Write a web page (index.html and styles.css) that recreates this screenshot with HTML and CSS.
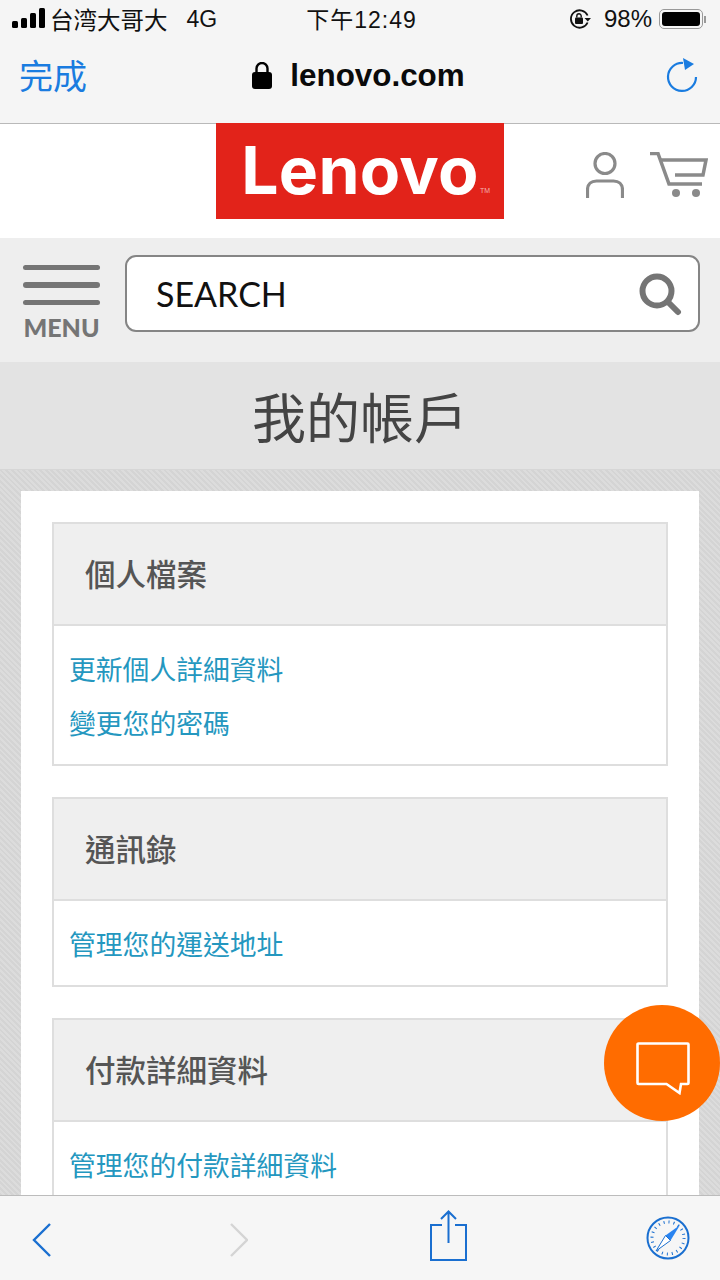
FILE: index.html
```html
<!DOCTYPE html>
<html lang="zh-Hant">
<head>
  <meta charset="UTF-8" />
  <meta name="viewport" content="width=device-width, initial-scale=1.0" />
  <title>我的帳戶</title>
  <link rel="stylesheet" href="styles.css">
</head>
<body>
  <div class="status-bar">
    <div class="status-left">
      <svg class="signal" width="34" height="20" viewBox="0 0 34 20">
        <rect x="0" y="13" width="6" height="7" rx="1.5" />
        <rect x="9" y="10" width="6" height="10" rx="1.5" />
        <rect x="18" y="5" width="6" height="15" rx="1.5" />
        <rect x="27" y="0" width="6" height="20" rx="1.5" />
      </svg>
      <span class="carrier">台湾大哥大</span>
      <span class="network">4G</span>
    </div>
    <div class="status-time">下午12:49</div>
    <div class="status-right">
      <svg width="22" height="20" viewBox="0 0 22 20">
        <path d="M18.6 13.5A8.7 8.7 0 1 1 18.6 6.5" fill="none" stroke="#111" stroke-width="1.8" />
        <path d="M15.5 9h6.5l-3.2 3.6z" fill="#111" />
        <rect x="6" y="8.5" width="8" height="6.5" rx="1" fill="#111" />
        <path d="M7.8 8.5V7a2.2 2.2 0 0 1 4.4 0v1.5" fill="none" stroke="#111" stroke-width="1.4" />
      </svg>
      <span class="battery-pct">98%</span>
      <div class="battery"><div class="battery-fill"></div></div>
      <div class="battery-tip"></div>
    </div>
  </div>

  <div class="url-bar">
    <div class="done">完成</div>
    <div class="address">
      <svg width="20" height="27" viewBox="0 0 20 27">
        <rect x="0" y="10" width="20" height="17" rx="3" fill="#000" />
        <path d="M4.5 11V6.5a5.5 5.5 0 0 1 11 0V11" fill="none" stroke="#000" stroke-width="2.4" />
      </svg>
      <span>lenovo.com</span>
    </div>
    <div class="reload">
      <svg width="32" height="36" viewBox="0 0 32 36">
        <path d="M30 20A14 14 0 1 1 17 6" fill="none" stroke="#1a7ce0" stroke-width="2.2" />
        <path d="M17 1L28 7 19 13z" fill="#1a7ce0" />
      </svg>
    </div>
  </div>

  <header class="site-header">
    <div class="logo"><span class="logo-text">Lenovo</span><span class="logo-tm">TM</span></div>
    <div class="header-icons">
      <svg width="38" height="46" viewBox="0 0 38 46">
        <circle cx="19" cy="11.5" r="10" fill="none" stroke="#8a8a8a" stroke-width="3.2" />
        <path d="M1.500 46V38c0-6 4-9 9-9h17c5 0 9 3 9 9v8" fill="none" stroke="#8a8a8a" stroke-width="3.2" />
      </svg>
      <svg width="58" height="46" viewBox="0 0 58 46">
        <path d="M0 1.500h8L19 32h33" fill="none" stroke="#8a8a8a" stroke-width="3.5" />
        <path d="M11 8h45L53 23H25" fill="none" stroke="#8a8a8a" stroke-width="3.5" />
        <circle cx="26" cy="41" r="4" fill="#8a8a8a" />
        <circle cx="46" cy="41" r="4" fill="#8a8a8a" />
      </svg>
    </div>
  </header>

  <div class="search-row">
    <div class="menu">
      <div class="menu-bar"></div>
      <div class="menu-bar"></div>
      <div class="menu-bar"></div>
      <div class="menu-label">MENU</div>
    </div>
    <div class="search-box">
      <span>SEARCH</span>
      <svg width="44" height="44" viewBox="0 0 44 44">
        <circle cx="19" cy="19" r="14.5" fill="none" stroke="#757575" stroke-width="6" />
        <path d="M30 30l10 10" stroke="#757575" stroke-width="6" stroke-linecap="round" />
      </svg>
    </div>
  </div>

  <h1 class="page-title">我的帳戶</h1>

  <main class="content">
    <div class="card">
      <section class="panel">
        <h2>個人檔案</h2>
        <div class="panel-body">
          <a href="#">更新個人詳細資料</a>
          <a href="#">變更您的密碼</a>
        </div>
      </section>
      <section class="panel">
        <h2>通訊錄</h2>
        <div class="panel-body">
          <a href="#">管理您的運送地址</a>
        </div>
      </section>
      <section class="panel">
        <h2>付款詳細資料</h2>
        <div class="panel-body">
          <a href="#">管理您的付款詳細資料</a>
        </div>
      </section>
    </div>
  </main>

  <div class="chat-btn">
    <svg width="54" height="53" viewBox="0 0 54 53">
      <path d="M2.500 1.500h49a1 1 0 0 1 1 1V41a1 1 0 0 1-1 1H45l-1.500 9-13-9H2.500a1 1 0 0 1-1-1V2.500a1 1 0 0 1 1-1z" fill="none" stroke="#fff" stroke-width="2.600" />
    </svg>
  </div>

  <nav class="toolbar">
    <svg class="tb-arrow" width="19" height="34" viewBox="0 0 19 34">
      <path d="M18 1L2 17l16 16" fill="none" stroke="#1a6fd0" stroke-width="2.4" />
    </svg>
    <svg class="tb-arrow" width="18" height="34" viewBox="0 0 18 34">
      <path d="M1 1l16 16L1 33" fill="none" stroke="#d4d4d4" stroke-width="2.4" />
    </svg>
    <svg class="tb-share" width="37" height="51" viewBox="0 0 37 51">
      <path d="M12 15H1v35h35V15H25" fill="none" stroke="#1a6fd0" stroke-width="2" />
      <path d="M18.500 33V2M11 9l7.500-7.500L26 9" fill="none" stroke="#1a6fd0" stroke-width="2" />
    </svg>
    <svg width="44" height="44" viewBox="0 0 44 44">
      <circle cx="22" cy="22" r="20.5" fill="none" stroke="#1a6fd0" stroke-width="2" />
      <circle cx="22" cy="22" r="16" fill="none" stroke="#1a6fd0" stroke-width="3" stroke-dasharray="1 4.03" />
      <path d="M34 9L19.500 19.500 24.500 24.500z" fill="#2a84f0" />
      <path d="M10 35L19.500 19.500 24.500 24.500z" fill="#fff" stroke="#1a6fd0" stroke-width="1" />
    </svg>
  </nav>
</body>
</html>
```

FILE: styles.css
```css
html, body {
  margin: 0;
  padding: 0;
  height: 1280px;
  overflow: hidden;
  font-family: "Noto Sans CJK TC", "Noto Sans", sans-serif;
}
body {
  position: relative;
  display: flex;
  flex-direction: column;
  width: 720px;
  background: #fff;
}

/* iOS status bar */
.status-bar {
  display: grid;
  grid-template-columns: 1fr auto 1fr;
  align-items: center;
  height: 38px;
  padding: 0 14px 0 12px;
  background: #f5f5f5;
  color: #111;
  font-family: "Liberation Sans", "Noto Sans CJK TC", sans-serif;
  font-size: 23px;
}
.status-left {
  display: flex;
  align-items: center;
}
.signal {
  fill: #000;
  margin-right: 4px;
  margin-bottom: 2px;
}
.carrier {
  font-size: 23.5px;
}
.network {
  margin-left: 19px;
}
.status-time {
  margin: 0 0 3px 5px;
  font-size: 23px;
  letter-spacing: 1px;
}
.status-right {
  display: flex;
  align-items: center;
  justify-content: flex-end;
}
.battery-pct {
  margin-left: 13px;
  margin-right: 7px;
  font-size: 24px;
}
.battery {
  flex-shrink: 0;
  width: 44px;
  height: 20px;
  padding: 2px;
  box-sizing: border-box;
  border: 1.5px solid #999;
  border-radius: 5px;
}
.battery-fill {
  width: 100%;
  height: 100%;
  background: #000;
  border-radius: 3px;
}
.battery-tip {
  flex-shrink: 0;
  width: 2px;
  height: 7px;
  margin-left: 1px;
  background: #999;
}

/* browser address bar */
.url-bar {
  display: grid;
  grid-template-columns: 1fr auto 1fr;
  align-items: center;
  height: 74px;
  padding: 0 22px 11px 19px;
  background: #f5f5f5;
  border-bottom: 1px solid #b9b9b9;
}
.done {
  font-size: 34px;
  line-height: 1;
  color: #1a7ce0;
}
.address {
  display: flex;
  align-items: center;
  gap: 18px;
  padding-top: 1px;
  color: #0a0a0a;
  font-family: "Liberation Sans", sans-serif;
  font-size: 31.4px;
  font-weight: bold;
}
.reload {
  display: flex;
  justify-content: flex-end;
}

/* site */
.site-header {
  display: flex;
  align-items: flex-start;
  height: 114px;
  padding-left: 216px;
  background: #fff;
}
.logo {
  display: flex;
  position: relative;
  align-items: center;
  justify-content: center;
  width: 288px;
  height: 96px;
  margin-top: -1px;
  background: #e2231a;
  color: #fff;
}
.logo-text {
  margin-bottom: 3px;
  font-family: Inter, "Liberation Sans", sans-serif;
  font-size: 66px;
  font-weight: 700;
  line-height: 1;
  letter-spacing: 0.3px;
  filter: blur(0.7px);
}
.logo-tm {
  position: absolute;
  right: 14px;
  top: 64px;
  font-family: "Liberation Sans", sans-serif;
  font-size: 7px;
  color: #f3b0ac;
}
.header-icons {
  display: flex;
  gap: 26px;
  margin: 28px 0 0 82px;
}
.search-row {
  display: flex;
  align-items: center;
  gap: 25px;
  height: 124px;
  padding: 0 20px 0 23px;
  box-sizing: border-box;
  background: #eeeeee;
}
.menu {
  display: flex;
  flex-direction: column;
  width: 77px;
  gap: 12px;
  margin-top: 5px;
}
.menu-bar {
  height: 5.5px;
  background: #757575;
  border-radius: 3px;
}
.menu-label {
  margin-top: -2px;
  font-family: Lato, sans-serif;
  font-size: 25px;
  font-weight: 900;
  line-height: 25px;
  text-align: center;
  color: #757575;
}
.search-box {
  display: flex;
  flex: 1;
  align-items: center;
  justify-content: space-between;
  height: 77px;
  margin-bottom: 13px;
  padding: 0 16px 0 29px;
  box-sizing: border-box;
  background: #fff;
  border: 2px solid #858585;
  border-radius: 11px;
  font-family: Lato, sans-serif;
  font-size: 34px;
  color: #111;
}
.page-title {
  height: 108px;
  margin: 0;
  box-sizing: border-box;
  background: #e3e3e3;
  border-bottom: 1px solid #d6d6d6;
  font-size: 54px;
  font-weight: 400;
  line-height: 108px;
  text-align: center;
  color: #444;
}
.content {
  flex: 1;
  min-height: 0;
  overflow: hidden;
  padding: 21px 21px 0;
  background: repeating-linear-gradient(45deg, #d4d4d4, #d4d4d4 2px, #dcdcdc 2px, #dcdcdc 4px);
}
.card {
  display: flex;
  flex-direction: column;
  gap: 31.5px;
  padding: 31px 31px 0;
  background: #fff;
}
.panel {
  border: 2px solid #dedede;
}
.panel h2 {
  height: 100px;
  margin: 0;
  padding-left: 31px;
  background: #efefef;
  border-bottom: 2px solid #dedede;
  font-size: 30.5px;
  font-weight: 500;
  line-height: 98px;
  color: #555;
}
.panel-body {
  display: flex;
  flex-direction: column;
  padding: 16px 15px 13.5px;
}
.panel-body a {
  height: 54px;
  font-size: 26.8px;
  line-height: 54px;
  color: #2497bf;
  text-decoration: none;
}
.chat-btn {
  position: absolute;
  left: 604px;
  top: 1005px;
  display: flex;
  align-items: center;
  justify-content: center;
  width: 116px;
  height: 116px;
  background: #ff6c00;
  border-radius: 50%;
}
.chat-btn svg {
  margin: 11px 0 0 2px;
}

/* browser bottom bar */
.toolbar {
  display: flex;
  align-items: center;
  justify-content: space-between;
  height: 84px;
  padding: 0 30px 0 32px;
  background: #f6f6f6;
  border-top: 1px solid #bcbcbc;
}
.tb-arrow {
  margin-top: 3px;
}
.tb-share {
  margin-bottom: 5px;
  margin-left: 2px;
}
```
